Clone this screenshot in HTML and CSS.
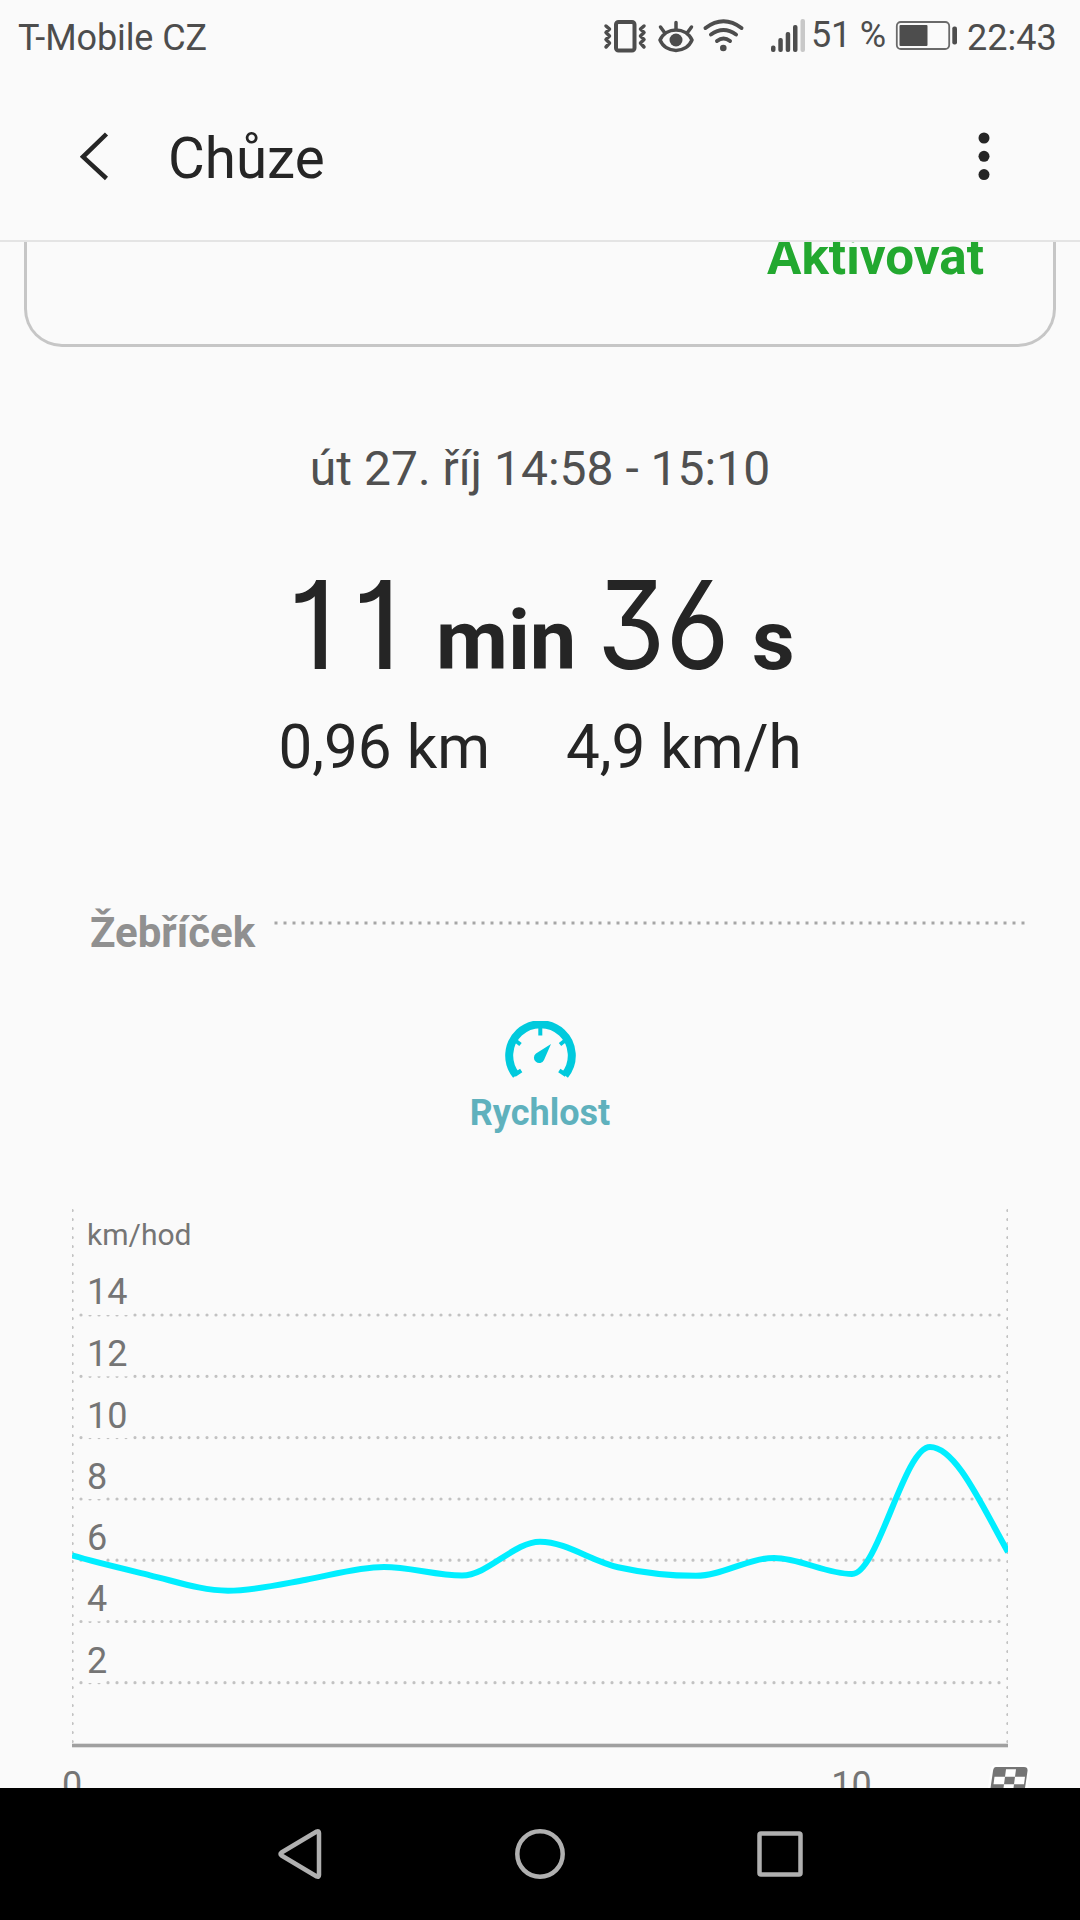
FILE: index.html
```html
<!DOCTYPE html>
<html lang="cs">
<head>
<meta charset="utf-8">
<title>Chůze</title>
<link rel="stylesheet" href="styles.css">
</head>
<body>
<div class="screen">
  <div class="status">
    <span class="carrier">T-Mobile CZ</span>
    <svg class="status-icons" viewBox="600 0 210 76" width="210" height="76">
      <g fill="none" stroke="#4d4d4d" stroke-width="4" stroke-linejoin="round" stroke-linecap="round">
        <rect x="616" y="22" width="18.5" height="28.5" rx="2.5"/>
        <path stroke-width="3.500" d="M606 26l3.500 3-3.500 3.500 3.500 3.500-3.500 3.500 3.500 3.500-3.500 4M644 26l-3.500 3 3.500 3.500-3.500 3.500 3.500 3.500-3.500 3.500 3.500 4"/>
        <path stroke-width="3.500" d="M660 40C666 26.500 686 26.500 692 40C686 54 666 54 660 40ZM676 29v-6.500M664.500 32.500l-4-5.500M687.500 32.500l4-5.500"/>
        <path d="M705.500 28Q723.500 14.500 741.500 28M711 34.500Q723.500 25.500 736 34.500M717 41Q723.500 36 730 41"/>
      </g>
      <g fill="#4d4d4d">
        <circle cx="676" cy="40" r="6.500"/><circle cx="723.300" cy="48" r="3.300"/>
        <rect x="771" y="45.500" width="4.500" height="6.500" rx="2"/><rect x="778.300" y="38" width="4.500" height="14" rx="2"/>
        <rect x="785.700" y="32" width="4.500" height="20" rx="2"/><rect x="793" y="25" width="4.500" height="27" rx="2"/>
        <rect x="800.500" y="19" width="4.500" height="33" rx="2" fill="#c8c8c8"/>
      </g>
    </svg>
    <span class="percent">51 %</span>
    <svg class="battery" viewBox="895 0 64 76" width="64" height="76">
      <rect x="896.800" y="22" width="52.400" height="27" rx="4" fill="none" stroke="#6a6a6a" stroke-width="1.800"/>
      <rect x="899.500" y="25" width="28" height="21" rx="1" fill="#4d4d4d"/>
      <rect x="952.300" y="26.500" width="4.700" height="18" rx="2" fill="#4d4d4d"/>
    </svg>
    <span class="clock">22:43</span>
  </div>
  <header class="appbar">
    <svg class="back" viewBox="0 0 30 50" width="30" height="50"><path d="M26.500 2L3 24.800L26.500 46.500" fill="none" stroke="#252525" stroke-width="4.500"/></svg>
    <h1 class="title">Chůze</h1>
    <svg class="more" viewBox="0 0 12 50" width="12" height="50" fill="#252525"><circle cx="6" cy="6" r="5.500"/><circle cx="6" cy="24.300" r="5.500"/><circle cx="6" cy="42.600" r="5.500"/></svg>
  </header>
  <main class="content">
    <div class="card"><span class="activate">Aktivovat</span></div>
    <p class="date">út 27. říj 14:58 - 15:10</p>
    <p class="duration"><span class="num num-min">11</span><span class="unit">min</span><span class="num num-sec">36</span><span class="unit">s</span></p>
    <div class="stats"><span class="distance">0,96 km</span><span class="speed">4,9 km/h</span></div>
    <div class="section">
      <h2 class="section-title">Žebříček</h2>
      <svg class="rule" viewBox="0 0 752 4" width="752" height="4"><path d="M0.500 2H752" stroke="#a6a6a6" stroke-width="3" stroke-dasharray="3 6"/></svg>
    </div>
    <div class="metric">
      <svg class="gauge" viewBox="504 1020 72 58" width="72" height="58">
        <path d="M516.200 1074.300A31.300 31.300 0 1 1 564.800 1074.300" fill="none" stroke="#00cadd" stroke-width="8"/>
        <path d="M514.500 1074l6.700-4.500M566 1074l-6.700-4.500M540.300 1026v8.500M516 1040l4.500 3.500M564.500 1040l-4.500 3.500" stroke="#00cadd" stroke-width="4"/>
        <path d="M551 1043L536 1052.500A5.300 5.300 0 1 0 544 1059Z" fill="#00cadd"/>
      </svg>
      <span class="metric-name">Rychlost</span>
    </div>
    <svg class="chart" viewBox="0 1200 1080 588" width="1080" height="588">
      <defs><clipPath id="plot"><rect x="72" y="1200" width="936" height="560"/></clipPath></defs>
      <g clip-path="url(#plot)">
        <g fill="none" stroke="#c2c2c2" stroke-width="3.200" stroke-linecap="round" stroke-dasharray="0 9">
          <path d="M72.300 1210.500V1744M1007.700 1210.500V1744" stroke-width="3"/>
          <path d="M81 1315H1000M81 1376.300H1000M81 1437.600H1000M81 1499H1000M81 1560.200H1000M81 1621.500H1000M81 1682.700H1000"/>
        </g>
        <g fill="#fafafa">
          <rect x="87" y="1285" width="42" height="30"/><rect x="87" y="1346" width="42" height="30.300"/><rect x="87" y="1408" width="42" height="30"/>
          <rect x="87" y="1469" width="18" height="30"/><rect x="87" y="1530" width="18" height="30"/><rect x="87" y="1591" width="18" height="30.300"/><rect x="87" y="1653" width="18" height="30"/>
        </g>
        <path d="M72 1745.500H1008" stroke="#dedede" stroke-width="5"/><path d="M72 1745.500H1008" stroke="#a0a0a0" stroke-width="3"/>
      </g>
      <g class="tick">
        <text class="axis-unit" x="87" y="1244.700">km/hod</text>
        <text x="87" y="1304">14</text><text x="87" y="1366">12</text><text x="87" y="1428">10</text><text x="87" y="1489">8</text>
        <text x="87" y="1550">6</text><text x="87" y="1610.700">4</text><text x="87" y="1673">2</text>
        <text class="mid" x="72" y="1797">0</text><text class="mid" x="851.500" y="1797">10</text>
      </g>
      <path clip-path="url(#plot)" fill="none" stroke="#00eeff" stroke-width="6" d="M72 1555.500C98 1563 124 1569 150 1575.300C176 1581.500 202 1590.700 228 1590.700C254 1590.700 280 1584.500 306 1579.800C332 1575 358 1567 384 1567C410 1567 436 1575.500 462 1575.500C488 1575.500 514 1541.700 540 1541.700C566 1541.700 592 1561.500 618 1567.200C644 1573 670 1575.800 696 1575.800C722 1575.800 748 1558 774 1558C800 1558 826 1574 852 1574C878 1574 904 1447 930 1447C956 1447 982 1506 1008 1552"/>
      <path d="M996 1767H1024Q1028 1767 1027.500 1771L1024 1795H989.500L993 1771Q993.500 1767 996 1767Z" fill="#757575" stroke="#fff" stroke-width="5" paint-order="stroke" stroke-linejoin="round"/>
      <path d="M1006 1769.300h10l-1 7.500h-10zM994.500 1776.800h10.500l-1 7.500h-10.500zM1015 1776.800h10l-1 7.500h-10zM1004 1784.300h10l-1 7.500h-10z" fill="#fff"/>
    </svg>
  </main>
  <nav class="navbar">
    <svg viewBox="277 1826 46 56" width="46" height="56"><path d="M316.700 1831.500L281.500 1852.500Q279.500 1854 281.500 1855.500L316.700 1876.500Q319 1877.500 319 1875V1833Q319 1830.500 316.700 1831.500Z"/></svg>
    <svg viewBox="513 1826 54 56" width="54" height="56"><circle cx="540" cy="1854" r="22.700"/></svg>
    <svg viewBox="757 1826 48 56" width="48" height="56"><rect x="759.500" y="1833.500" width="41" height="41" rx="1.500"/></svg>
  </nav>
</div>
</body>
</html>
```
FILE: styles.css
```css
* { box-sizing: border-box; margin: 0; padding: 0; }
body { background: #fafafa; }
svg { display: block; flex: none; }
.screen {
  display: flex; flex-direction: column;
  width: 1080px; height: 1920px; overflow: hidden;
  background: #fafafa; color: #252525;
  font-family: Roboto, "Liberation Sans", sans-serif;
  white-space: nowrap;
}
.status {
  display: flex; align-items: flex-start;
  height: 76px; flex: none; padding-left: 18px;
  color: #4d4d4d; font-size: 36px; line-height: 76px;
}
.carrier { width: 582px; letter-spacing: -0.1px; }
.percent { width: 85px; padding-left: 1px; line-height: 71px; letter-spacing: -0.2px; }
.clock { padding-left: 8px; }
.appbar {
  display: flex; align-items: center;
  height: 166px; flex: none; padding: 0 90px 3px 80px;
  border-bottom: 2px solid #e4e4e4;
}
.title { margin: 5px 0 0 58px; font-size: 56.500px; font-weight: 400; line-height: 76px; }
.more { margin-left: auto; }
.content {
  display: flex; flex-direction: column; align-items: center;
  height: 1546px; flex: none; overflow: hidden;
}
.card {
  display: flex; justify-content: flex-end;
  width: 1032px; height: 105px; flex: none; padding-right: 69px;
  border: 3px solid #c6c6c6; border-top: 0; border-radius: 0 0 38px 38px;
}
.activate { margin-top: -15px; height: 60px; color: #22a82f; font-size: 51.200px; font-weight: 700; line-height: 60px; }
.date { margin-top: 92px; color: #505050; font-size: 48px; line-height: 60px; }
.duration {
  display: grid; grid-template-columns: 148px 161px 155px auto; align-items: baseline; justify-content: start;
  width: 1080px; padding-left: 288px;
  height: 130px; margin-top: 61px; line-height: 130px;
}
.num { font-family: Inter, Roboto, sans-serif; font-size: 122px; font-feature-settings: "ss01", "cv01", "cv09", "cv03"; }
.num-min { letter-spacing: 16px; }
.num-sec { transform: scaleX(0.905); transform-origin: left; }
.unit { font-size: 83px; font-weight: 700; }
.stats { display: flex; gap: 76px; margin-top: 23px; font-size: 60.200px; line-height: 70px; }
.section { display: flex; width: 1080px; margin-top: 120px; padding-left: 90px; }
.section-title { width: 184px; color: #909090; font-size: 42px; font-weight: 700; line-height: 60px; }
.rule { margin-top: 18px; }
.metric { display: flex; flex-direction: column; align-items: center; margin-top: 58px; }
.metric-name { margin-top: 14px; color: #5fb1bd; font-size: 36px; font-weight: 700; line-height: 40px; }
.chart { margin-top: 67px; }
.tick { fill: #757575; font-size: 36px; }
.axis-unit { font-size: 30px; }
.mid { text-anchor: middle; }
.navbar {
  display: flex; align-items: center; gap: 190px;
  height: 132px; flex: none; padding-left: 277px; background: #000;
}
.navbar svg { fill: none; stroke: #b0b0b0; stroke-width: 4.500px; stroke-linejoin: round; }
```
